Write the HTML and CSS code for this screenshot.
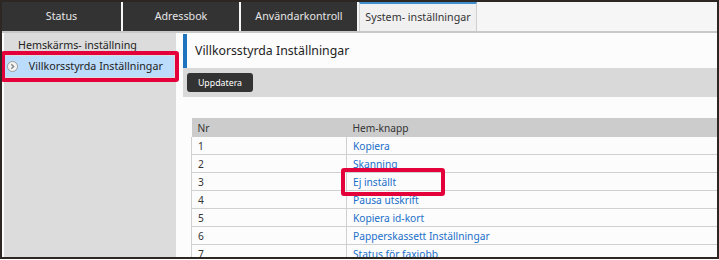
FILE: index.html
```html
<!DOCTYPE html>
<html lang="sv">
<head>
    <meta charset="UTF-8">
    <title>Villkorsstyrda Inställningar</title>
    <link rel="stylesheet" href="styles.css">
</head>
<body>

<div class="frame">
    <div class="tabs">
        <div class="tab first">Status</div>
        <div class="tab">Adressbok</div>
        <div class="tab">Användarkontroll</div>
        <div class="tab active">System- inställningar</div>
    </div>

    <div class="main">
        <div class="sidebar">
            <div class="side-item">Hemskärms- inställning</div>
            <div class="side-item selected">
                <span class="chev"><svg width="11" height="11" viewBox="0 0 11 11"><circle cx="5.5" cy="5.5" r="5" fill="#f4f4f4" stroke="#9a9a9a" stroke-width="1"/><path d="M4.3 3.2 L6.6 5.5 L4.3 7.8" fill="none" stroke="#888" stroke-width="1.5"/></svg></span>
                Villkorsstyrda Inställningar
                <span class="mark"></span>
            </div>
        </div>

        <div class="content">
            <div class="title">Villkorsstyrda Inställningar</div>
            <div class="toolbar">
                <button class="btn">Uppdatera</button>
            </div>

            <table class="list">
                <tr><th class="col-nr">Nr</th><th>Hem-knapp</th></tr>
                <tr><td>1</td><td><a href="#">Kopiera</a></td></tr>
                <tr><td>2</td><td><a href="#">Skanning</a></td></tr>
                <tr><td>3</td><td class="marked"><a href="#">Ej inställt</a><span class="mark"></span></td></tr>
                <tr><td>4</td><td><a href="#">Pausa utskrift</a></td></tr>
                <tr><td>5</td><td><a href="#">Kopiera id-kort</a></td></tr>
                <tr><td>6</td><td><a href="#">Papperskassett Inställningar</a></td></tr>
                <tr><td>7</td><td><a href="#">Status för faxjobb</a></td></tr>
            </table>
        </div>
    </div>
</div>

</body>
</html>
```

FILE: styles.css
```css
body {
    margin: 0;
    font-family: "Noto Sans", "Open Sans", sans-serif;
    background-color: #fff;
    white-space: nowrap;
}
.frame {
    width: 719px;
    height: 259px;
    box-sizing: border-box;
    border: 2px solid #2d2724;
    background-color: #fcfcfc;
    overflow: hidden;
}
.tabs {
    display: flex;
    height: 31px;
    box-sizing: border-box;
    background-color: #f6f6f6;
    border-bottom: 2px solid #c8c8c8;
}
.tab {
    width: 116px;
    margin-right: 2px;
    background-color: #333;
    color: #e6e6e6;
    font-size: 10.7px;
    text-align: center;
    line-height: 29px;
}
.tab.first {
    width: 119px;
}
.tab.active {
    background-color: #f0f0f0;
    color: #333;
    border-top: 2px solid #3f8fcf;
    border-left: 1px solid #d0d0d0;
    border-right: 1px solid #d0d0d0;
    line-height: 26px;
    margin-right: 0;
}
.main {
    display: flex;
    height: 224px;
}
.sidebar {
    width: 172px;
    margin-left: 2px;
    padding-top: 2px;
    background-color: #dcdcdc;
}
.side-item {
    position: relative;
    height: 21px;
    line-height: 21px;
    margin: 0 2px 0 1px;
    padding-left: 13px;
    font-size: 10.7px;
    color: #222;
}
.side-item.selected {
    background-color: #bcdcfb;
    padding-left: 2px;
}
.chev {
    display: inline-block;
    width: 11px;
    height: 11px;
    margin-right: 8px;
    vertical-align: -2px;
}
.chev svg {
    display: block;
}
.mark {
    position: absolute;
    border: 4px solid #e4003a;
    border-radius: 3px;
    box-sizing: border-box;
}
.side-item .mark {
    top: -5px;
    left: -4px;
    right: -5px;
    bottom: -5px;
}
.content {
    flex: 1;
    margin-left: 7px;
}
.title {
    height: 34px;
    margin-top: 1px;
    border-left: 4px solid #1f74bd;
    padding-left: 8px;
    font-size: 12.3px;
    line-height: 34px;
    color: #222;
}
.toolbar {
    height: 29px;
    padding: 5px 0 0 4px;
    box-sizing: border-box;
    background-color: #d9d9d9;
}
.btn {
    height: 19px;
    width: 66px;
    padding: 0;
    border: none;
    border-radius: 3px;
    background-color: #333;
    color: #fff;
    font-family: "Noto Sans", sans-serif;
    font-size: 8.8px;
    display: block;
}
.list {
    margin: 21px 0 0 8px;
    width: 526px;
    border-collapse: collapse;
    font-size: 10.2px;
    color: #333;
}
.list th {
    background-color: #cccccc;
    font-weight: normal;
    text-align: left;
    height: 19px;
    padding: 0 6px;
}
.list th.col-nr {
    width: 143px;
}
.list td {
    height: 17px;
    padding: 0 6px;
    border: 1px solid #d0d0d0;
    border-top: none;
    border-right: none;
}
.list a {
    color: #1a6fc9;
    text-decoration: none;
}
.list td.marked {
    position: relative;
}
.list td .mark {
    top: -5px;
    left: -6px;
    width: 104px;
    height: 28px;
}
```
